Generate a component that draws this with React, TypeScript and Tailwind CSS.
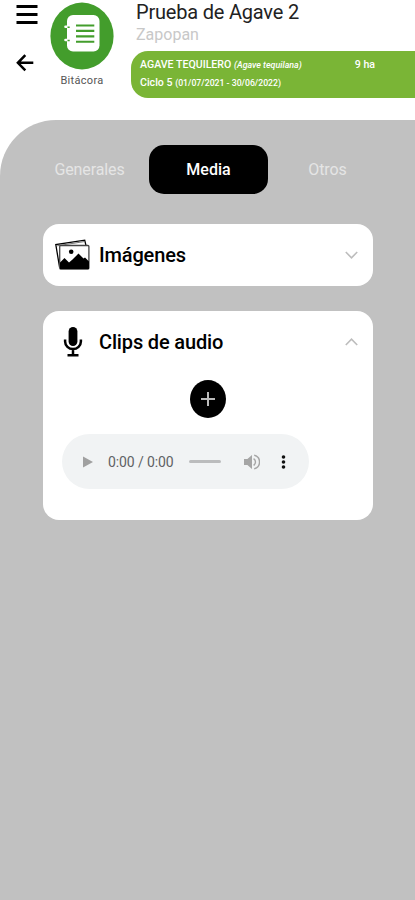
import type { ReactNode } from "react";

const tabs = ["Generales", "Media", "Otros"];

function MenuIcon() {
  return (
    <svg width="22" height="20" viewBox="0 0 22 20" fill="none" stroke="#000" strokeWidth="2.9">
      <path d="M.5 2.500h21M.5 10.500h21M.5 18.500h21" />
    </svg>
  );
}

function BackIcon() {
  return (
    <svg width="18" height="18" viewBox="0 0 18 18" fill="none" stroke="#000" strokeWidth="2.5">
      <path d="M17.3 8.8H2M9.3 1.2 1.9 8.8l7.4 7.6" />
    </svg>
  );
}

function LogbookIcon() {
  return (
    <svg width="64" height="68" viewBox="0 0 64 68" fill="none">
      <ellipse cx="32" cy="34" rx="31.6" ry="33.4" fill="#439d2c" />
      <rect x="17" y="13" width="32.500" height="36.5" rx="6" fill="#fff" />
      <path d="M15.500 24.8h5M15.500 38h5" stroke="#fff" strokeWidth="2.6" strokeLinecap="round" />
      <path d="M17.500 25.300h2.200M17.500 38.500h2.200" stroke="#439d2c" strokeWidth="1.4" />
      <path d="M26 23.5h18.3M26 28.9h18.3M26 34.4h18.3M26 39.8h18.3" stroke="#439d2c" strokeWidth="2.1" />
    </svg>
  );
}

function ImagesIcon() {
  return (
    <svg width="36" height="32" viewBox="0 0 36 32" fill="none" stroke="#000">
      <path d="m4.6 28.5-3.8-23L29.7 1.2l1.2 5" strokeWidth="1.3" />
      <path d="m2.2 6.8 27-4.2" stroke="#777" strokeWidth="1" />
      <rect x="4.7" y="6.5" width="29.2" height="23.5" rx="1" fill="#fff" stroke="#444" strokeWidth="1.3" />
      <circle cx="16.2" cy="12.7" r="2.3" fill="#000" stroke="none" />
      <path d="M5 23.500 9.500 19l4.500 4.500 3.500-3 6-6 5 5 1.500-1 4 4V30H5z" fill="#000" stroke="none" />
    </svg>
  );
}

function MicIcon() {
  return (
    <svg width="20" height="30" viewBox="0 0 20 30" fill="none" stroke="#000">
      <rect x="5.6" y="0" width="8.8" height="19" rx="4.4" fill="#000" stroke="none" />
      <path d="M2.1 12.4v2.1a7.9 7.500 0 0 0 15.8 0v-2.1M10 22V28M4.5 28.3h11" strokeWidth="2.5" />
    </svg>
  );
}

function Chevron({ open = false }: { open?: boolean }) {
  return (
    <svg width="13" height="8" viewBox="0 0 13 8" fill="none" stroke="#bdbdbd" strokeWidth="1.6">
      <path d={open ? "m.8 7 5.700-5.800L12.200 7" : "m.8 1 5.700 5.800L12.200 1"} />
    </svg>
  );
}

function VolumeIcon() {
  return (
    <svg width="16" height="16" viewBox="0 0 16 16" fill="none">
      <path d="M0 5h3.4L8 1v14l-4.6-4H0z" fill="#a5a5a5" />
      <path d="M9.6 4.6a4 4 0 0 1 0 6.8M10.2 1.2a7 7 0 0 1 0 13.6" stroke="#a5a5a5" strokeWidth="1.4" />
    </svg>
  );
}

function Card({ icon, title, open, children }: { icon: ReactNode; title: string; open?: boolean; children?: ReactNode }) {
  return (
    <section className="rounded-[16px] bg-white">
      <div className="flex h-[62px] items-center pr-[15px]">
        <div className="flex w-[56px] shrink-0 justify-center pl-[3px]">{icon}</div>
        <h2 className="flex-1 text-[20px] leading-6 font-medium tracking-[-0.15px] text-black">{title}</h2>
        <Chevron open={open} />
      </div>
      {children}
    </section>
  );
}

// Reproductor de audio
function AudioPlayer() {
  return (
    <div className="ml-[19px] flex h-[55px] w-[247px] items-center rounded-full bg-[#f1f3f4] pr-[20px] pl-[21px]">
      <svg width="10" height="12" viewBox="0 0 10 12" fill="#a0a0a0">
        <path d="M0 .5 10 6 0 11.5z" />
      </svg>
      <span className="ml-[15px] w-[81px] text-[14px] leading-5 tracking-[-0.1px] whitespace-nowrap text-[#606264]">
        0:00 / 0:00
      </span>
      <div className="h-[3px] w-[32px] rounded-full bg-[#bbbcbd]" />
      <div className="ml-[23px]">
        <VolumeIcon />
      </div>
      <svg className="ml-[21px]" width="5" height="16" viewBox="0 0 5 16" fill="#111">
        <circle cx="2.5" cy="3" r="1.8" />
        <circle cx="2.5" cy="8" r="1.8" />
        <circle cx="2.5" cy="13" r="1.8" />
      </svg>
    </div>
  );
}

export default function App() {
  return (
    <div className="h-[900px] w-[415px] overflow-hidden bg-white font-['Roboto',sans-serif]">
      {/* Encabezado */}
      <header className="flex h-[120px]">
        <div className="flex w-[50px] flex-col items-start gap-[30px] pt-[4px] pl-[16px]">
          <button aria-label="Menú">
            <MenuIcon />
          </button>
          <button aria-label="Regresar">
            <BackIcon />
          </button>
        </div>
        <div className="flex w-[64px] flex-col items-center pt-[2px]">
          <LogbookIcon />
          <span className="mt-[4px] text-[11px] leading-[14px] tracking-[0.3px] text-[#555]">Bitácora</span>
        </div>
        <div className="ml-[17px] flex-1">
          <h1 className="pl-[5px] text-[20px] leading-6 tracking-[-0.2px] whitespace-nowrap text-[#222]">
            Prueba de Agave 2
          </h1>
          <p className="pl-[5px] text-[16px] leading-[22px] text-[#c8c8c8]">Zapopan</p>
          <div className="mt-[5px] flex h-[47px] justify-between rounded-l-[17px] bg-[#7ab536] pr-[40px] pl-[9px] text-[10.6px] font-medium whitespace-nowrap text-white">
            <div className="pt-[5px] leading-[18px]">
              <p>
                AGAVE TEQUILERO <i className="text-[8.9px]">(Agave tequilana)</i>
              </p>
              <p>
                Ciclo 5 <span className="text-[8.7px]">(01/07/2021 - 30/06/2022)</span>
              </p>
            </div>
            <span className="pt-[5px] leading-[18px]">9 ha</span>
          </div>
        </div>
      </header>

      <main className="h-[780px] rounded-tl-[56px] bg-[#c1c1c1]">
        <nav className="flex pt-[25px] pl-[30px]">
          {tabs.map((tab) => (
            <button
              key={tab}
              className={
                tab === "Media"
                  ? "h-[49px] w-[119px] rounded-[15px] bg-black text-[16px] font-medium text-white"
                  : "h-[49px] w-[119px] text-[16px] tracking-[-0.1px] text-[#e5e5e5]"
              }
            >
              {tab}
            </button>
          ))}
        </nav>

        <div className="mt-[30px] mr-[42px] ml-[43px] flex flex-col gap-[25px]">
          <Card icon={<ImagesIcon />} title="Imágenes" />
          <Card icon={<MicIcon />} title="Clips de audio" open>
            <div className="flex justify-center pt-[7px]">
              <button
                aria-label="Agregar clip"
                className="flex h-[38px] w-[36px] items-center justify-center rounded-[50%] bg-black"
              >
                <svg width="14" height="14" viewBox="0 0 14 14" stroke="#bbb" strokeWidth="2">
                  <path d="M7 0v14M0 7h14" />
                </svg>
              </button>
            </div>
            <div className="pt-[16px] pb-[31px]">
              <AudioPlayer />
            </div>
          </Card>
        </div>
      </main>
    </div>
  );
}
